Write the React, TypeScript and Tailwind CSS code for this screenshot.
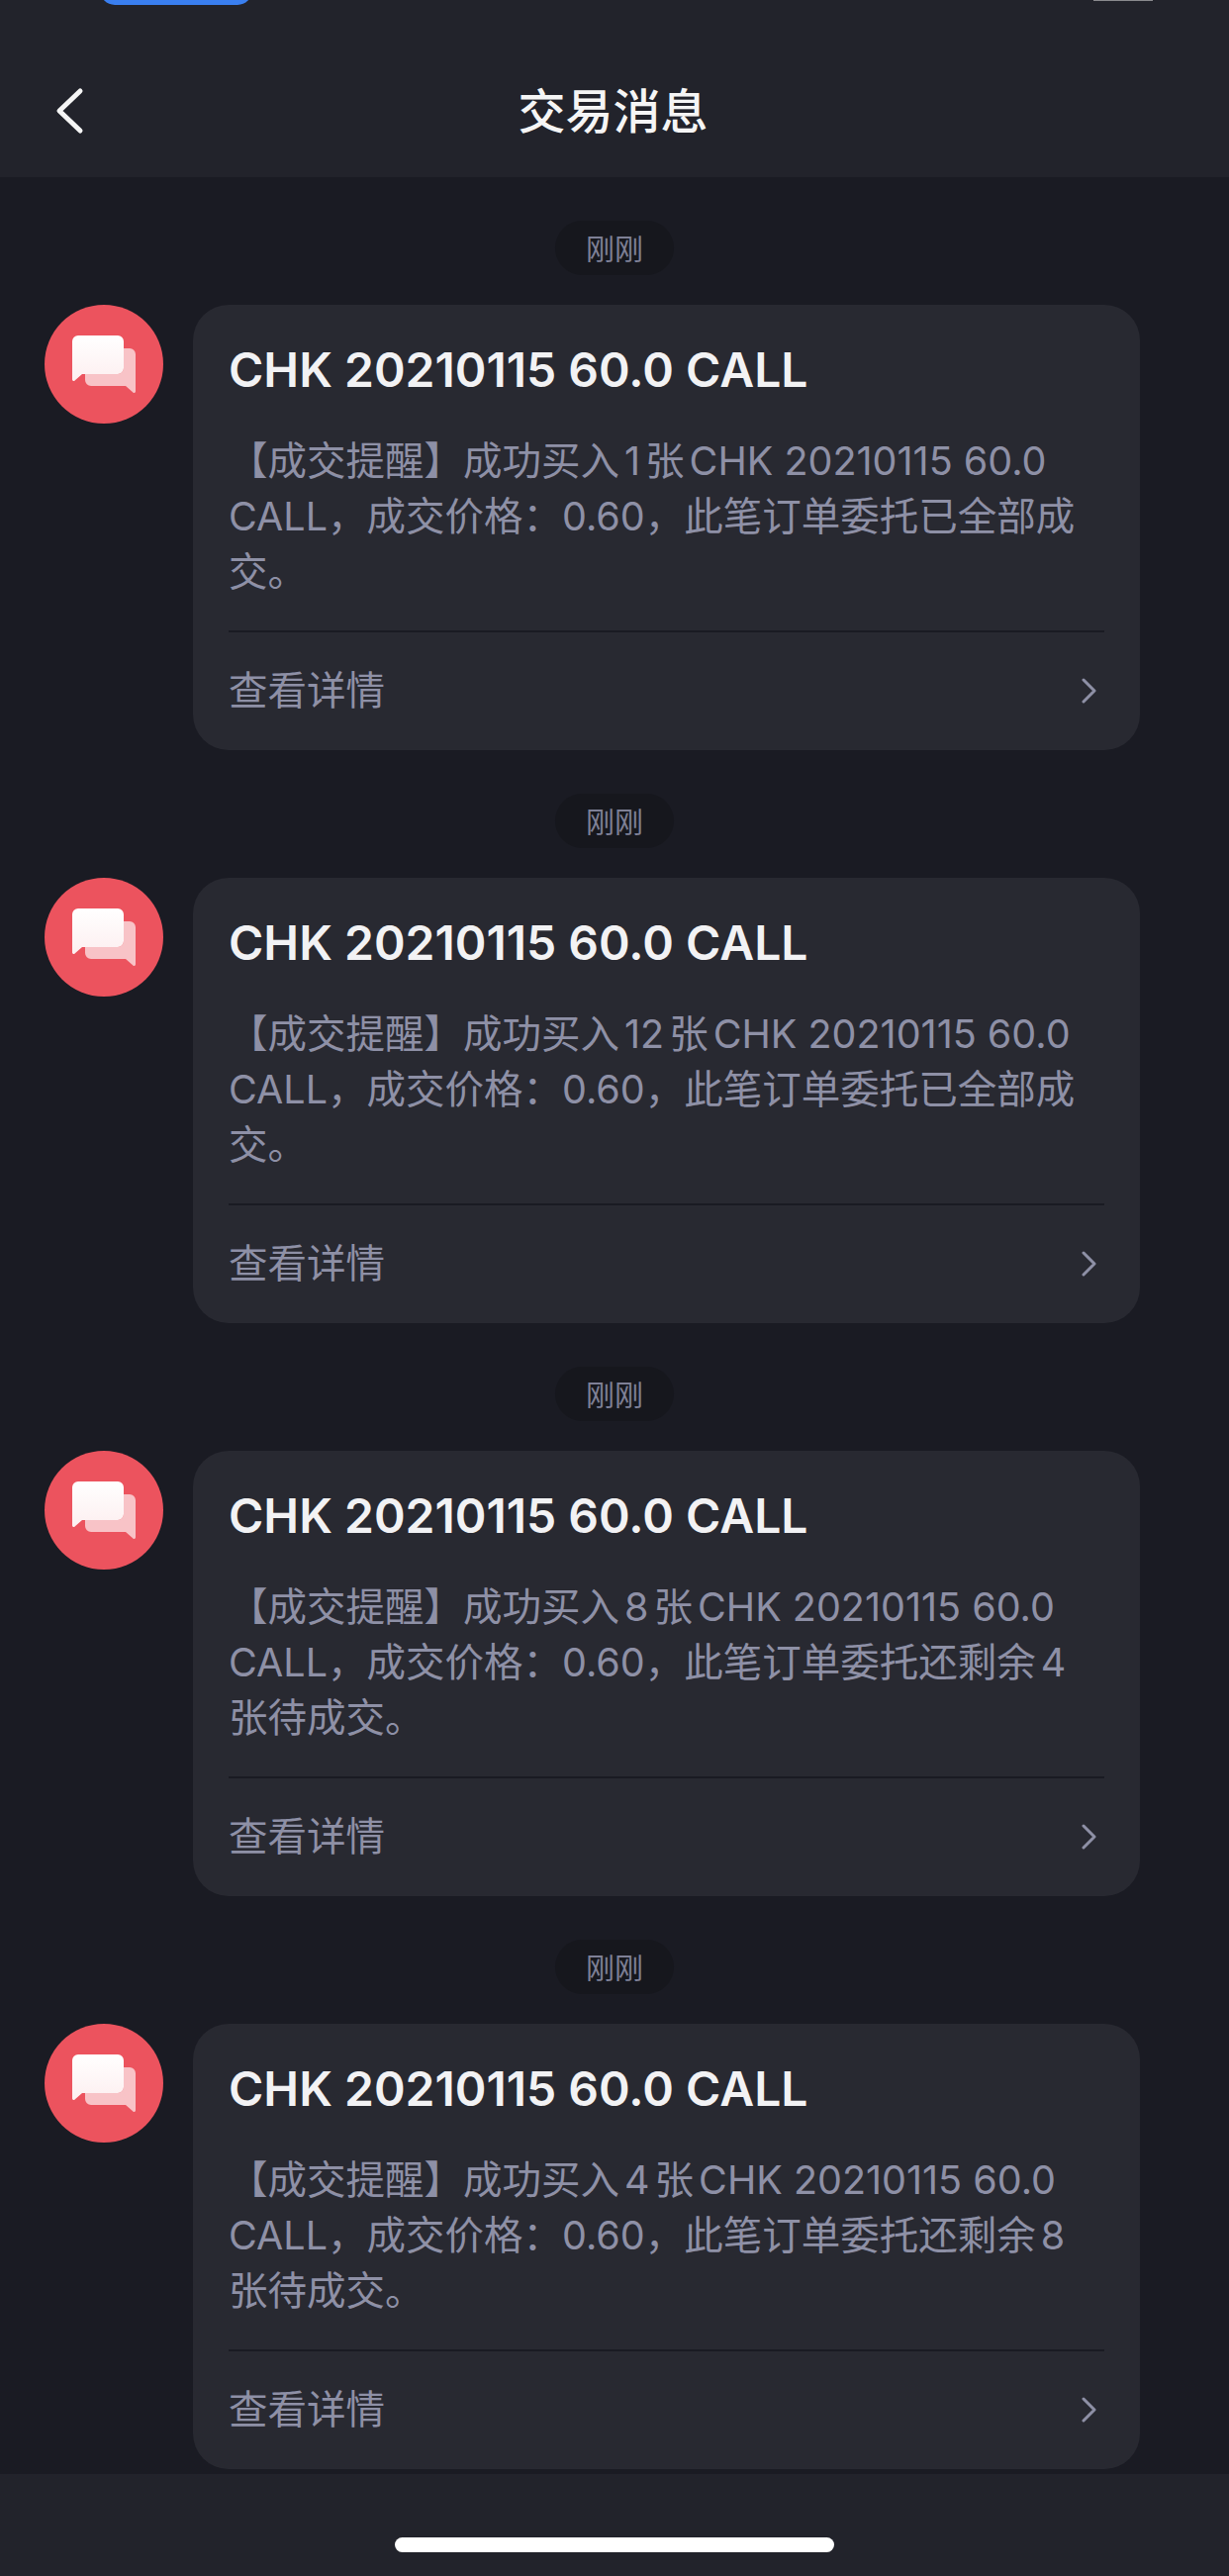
import React from 'react';

const messages = [
  {
    id: 1,
    lines: [
      <>【成交提醒】成功买入<span className="mx-[5px]">1</span>张<span className="ml-[5px]">CHK 20210115 60.0</span></>,
      'CALL，成交价格：0.60，此笔订单委托已全部成',
      '交。',
    ],
  },
  {
    id: 2,
    lines: [
      <>【成交提醒】成功买入<span className="mx-[5px]">12</span>张<span className="ml-[5px]">CHK 20210115 60.0</span></>,
      'CALL，成交价格：0.60，此笔订单委托已全部成',
      '交。',
    ],
  },
  {
    id: 3,
    lines: [
      <>【成交提醒】成功买入<span className="mx-[5px]">8</span>张<span className="ml-[5px]">CHK 20210115 60.0</span></>,
      <>CALL，成交价格：0.60，此笔订单委托还剩余<span className="ml-[5px]">4</span></>,
      '张待成交。',
    ],
  },
  {
    id: 4,
    lines: [
      <>【成交提醒】成功买入<span className="mx-[5px]">4</span>张<span className="ml-[5px]">CHK 20210115 60.0</span></>,
      <>CALL，成交价格：0.60，此笔订单委托还剩余<span className="ml-[5px]">8</span></>,
      '张待成交。',
    ],
  },
];

function ChatIcon() {
  return (
    <svg width="120" height="120" viewBox="0 0 120 120" fill="none">
      <defs>
        <linearGradient id="bubble" x1="0" y1="0" x2="0" y2="1">
          <stop offset="0" stopColor="#ffffff" />
          <stop offset="1" stopColor="#fdeff0" />
        </linearGradient>
      </defs>
      <circle cx="60" cy="60" r="60" fill="#ec535e" />
      <path
        d="M80 44h6a6 6 0 0 1 6 6v37.500a1.500 1.500 0 0 1-2.600 1L82 82H47a6 6 0 0 1-6-6v-6h33a6 6 0 0 0 6-6V44z"
        fill="#ffffff"
        fillOpacity="0.65"
      />
      <path
        d="M34 31h40a6 6 0 0 1 6 6v27a6 6 0 0 1-6 6H38l-7.400 6.500a1.500 1.500 0 0 1-2.600-1V37a6 6 0 0 1 6-6z"
        fill="url(#bubble)"
      />
    </svg>
  );
}

function MessageCard({ lines }: { lines: React.ReactNode[] }) {
  return (
    <div>
      <div className="flex justify-center">
        <div className="flex h-[55px] w-[120px] items-center justify-center rounded-full bg-[#16171d] pt-[5px] text-[29px] text-[#7e8096]">
          刚刚
        </div>
      </div>
      <div className="mt-[30px] flex pl-[45px]">
        <div className="h-[120px] w-[120px] shrink-0">
          <ChatIcon />
        </div>
        <div className="ml-[30px] h-[450px] w-[957px] rounded-[36px] bg-[#282931] px-[36px] pt-[37px]">
          <div className="text-[48px] leading-[58px] font-semibold text-[#f2f2f4]">CHK 20210115 60.0 CALL</div>
          <div className="mt-[35px] text-[39.500px] leading-[56px] text-[#8e90a6]">
            {lines.map((line, i) => (
              <div key={i} className="whitespace-nowrap">{line}</div>
            ))}
          </div>
          <div className="mt-[31px] flex h-[120px] items-center justify-between border-t-2 border-[#1a1b23]">
            <span className="pt-[2px] text-[39.500px] text-[#8e90a6]">查看详情</span>
            <svg width="18" height="26" viewBox="0 0 18 26" fill="none" className="mr-[6px]">
              <path d="M3 2l11 11L3 24" stroke="#8e90a6" strokeWidth="3" strokeLinecap="round" strokeLinejoin="round" />
            </svg>
          </div>
        </div>
      </div>
    </div>
  );
}

export default function App() {
  return (
    <div
      className="relative flex h-[2603px] w-[1242px] flex-col overflow-hidden bg-[#1a1b23]"
      style={{ fontFamily: 'Inter, "Noto Sans CJK SC", sans-serif' }}
    >
      {/* top edge of the cut-off status bar */}
      <div className="absolute left-[101px] -top-[25px] z-10 h-[30px] w-[154px] rounded-[18px] bg-[#3a7ff0]" />
      <div className="absolute left-[1105px] top-0 z-10 h-px w-[60px] bg-[#8a8a8e]" />

      <header className="relative flex h-[179px] shrink-0 items-center justify-center bg-[#22232b] pt-[47px]">
        <svg width="32" height="48" viewBox="0 0 32 48" fill="none" className="absolute left-[54px] top-[88px]">
          <path d="M27 4L6 24l21 20" stroke="#f5f5f5" strokeWidth="5" strokeLinecap="round" strokeLinejoin="round" />
        </svg>
        <h1 className="-ml-[3px] text-[48px] font-medium text-[#f5f5f5]">交易消息</h1>
      </header>

      <main className="flex min-h-0 flex-1 flex-col gap-[44px] pt-[44px]">
        {messages.map((m) => (
          <MessageCard key={m.id} lines={m.lines} />
        ))}
      </main>

      <footer className="flex h-[103px] shrink-0 justify-center bg-[#22232b] pt-[64px]">
        <div className="h-[15px] w-[444px] rounded-full bg-white" />
      </footer>
    </div>
  );
}
